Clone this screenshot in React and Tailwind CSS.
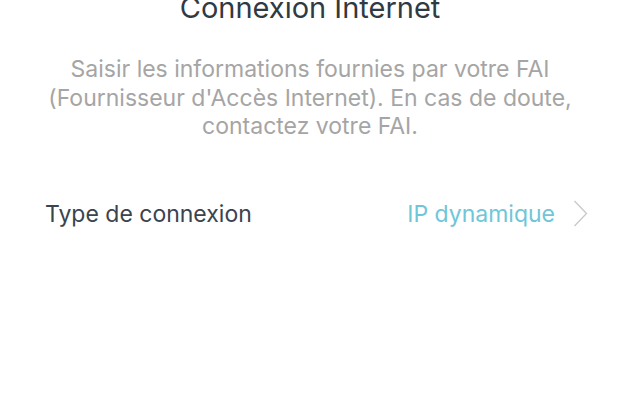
import React from 'react';

export default function App() {
  return (
    <div className="w-[620px] h-[410px] bg-white overflow-hidden" style={{ fontFamily: 'Inter, "Liberation Sans", sans-serif' }}>
      <div className="flex flex-col items-center mt-[-12px]">
        <h1 className="text-[29px] leading-[40px] text-[#2f3a44] font-normal">Connexion Internet</h1>
        <p className="mt-[27px] text-center text-[23px] leading-[28.5px] text-[#a5a5a5] w-[560px]">
          Saisir les informations fournies par votre FAI (Fournisseur d'Accès Internet). En cas de doute, contactez votre FAI.
        </p>
      </div>

      <div className="flex items-center justify-between mt-[56px] pl-[45px] pr-[32px]">
        <span className="text-[23px] text-[#3a444e]">Type de connexion</span>
        <div className="flex items-center gap-[18px]">
          <span className="text-[23px] text-[#6fc6d8]">IP dynamique</span>
          <svg width="15" height="27" viewBox="0 0 15 27" fill="none">
            <path d="M1.5 1L13.5 13.5L1.5 26" stroke="#c8c8c8" strokeWidth="1.3" />
          </svg>
        </div>
      </div>
    </div>
  );
}
